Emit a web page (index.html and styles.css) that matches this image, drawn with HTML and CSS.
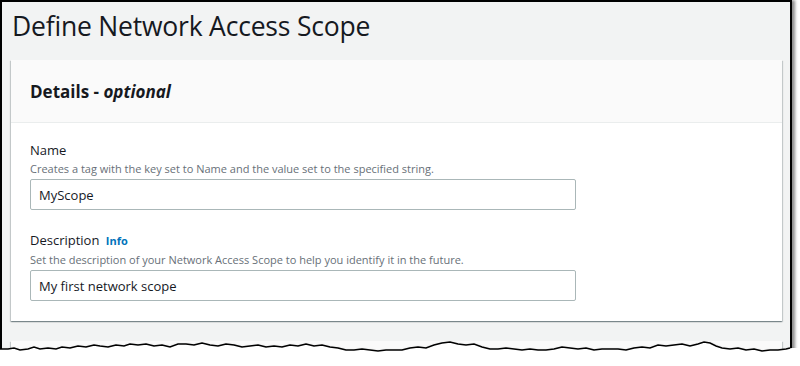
FILE: index.html
```html
<!DOCTYPE html>
<html lang="en">
<head>
    <meta charset="UTF-8">
    <title>Define Network Access Scope</title>
    <link rel="stylesheet" href="styles.css">
</head>
<body>
    <div class="frame">
        <h1 class="page-title">Define Network Access Scope</h1>

        <div class="card">
            <div class="card-header">
                <h2>Details - <em>optional</em></h2>
            </div>
            <div class="card-body">
                <div class="field">
                    <label for="name">Name</label>
                    <p class="hint">Creates a tag with the key set to Name and the value set to the specified string.</p>
                    <input type="text" id="name" value="MyScope">
                </div>
                <div class="field">
                    <label for="desc">Description <a href="#" class="info">Info</a></label>
                    <p class="hint">Set the description of your Network Access Scope to help you identify it in the future.</p>
                    <input type="text" id="desc" value="My first network scope">
                </div>
            </div>
        </div>

        <div class="card card-next"></div>
    </div>

    <!-- torn paper edge across the bottom of the screenshot -->
    <svg class="torn" width="800" height="40" viewBox="0 0 800 40">
        <defs>
            <filter id="blur" x="-5%" y="-50%" width="110%" height="200%">
                <feGaussianBlur stdDeviation="1.6"/>
            </filter>
        </defs>
        <polyline class="torn-shadow" filter="url(#blur)" points="0,18 8,18 14,17 20,19 28,18 34,16 40,18 48,17 56,18 62,16 70,17 78,15 86,16 94,14 100,15 108,16 116,14 124,15 130,13 138,14 146,13 154,15 162,14 170,16 178,13 186,13 194,14 202,12 210,14 218,15 226,13 234,14 242,16 250,15 258,14 266,16 274,15 282,16 290,14 298,15 306,13 314,15 322,14 330,16 338,17 346,19 354,19 362,18 370,19 378,20 386,19 394,19 402,19 410,17 418,16 426,17 434,14 442,12 450,11 458,13 466,14 474,13 482,16 490,18 498,18 506,17 514,18 522,19 530,18 538,19 546,19 554,18 562,16 570,17 578,18 586,17 594,19 602,18 610,18 618,18 626,19 634,17 642,16 650,17 658,14 666,15 674,14 682,13 690,15 698,13 704,11 710,12 716,15 722,17 730,18 738,17 746,19 754,18 762,20 770,19 778,19 786,18 792,17 796,19"/>
        <polygon class="torn-paper" points="0,15 8,15 14,14 20,16 28,15 34,13 40,15 48,14 56,15 62,13 70,14 78,12 86,13 94,11 100,12 108,13 116,11 124,12 130,10 138,11 146,10 154,12 162,11 170,13 178,10 186,10 194,11 202,9 210,11 218,12 226,10 234,11 242,13 250,12 258,11 266,13 274,12 282,13 290,11 298,12 306,10 314,12 322,11 330,13 338,14 346,16 354,16 362,15 370,16 378,17 386,16 394,16 402,16 410,14 418,13 426,14 434,11 442,9 450,8 458,10 466,11 474,10 482,13 490,15 498,15 506,14 514,15 522,16 530,15 538,16 546,16 554,15 562,13 570,14 578,15 586,14 594,16 602,15 610,15 618,15 626,16 634,14 642,13 650,14 658,11 666,12 674,11 682,10 690,12 698,10 704,8 710,9 716,12 722,14 730,15 738,14 746,16 754,15 762,17 770,16 778,16 786,15 792,14 800,14 800,40 0,40"/>
        <polyline class="torn-line" points="0,15 8,15 14,14 20,16 28,15 34,13 40,15 48,14 56,15 62,13 70,14 78,12 86,13 94,11 100,12 108,13 116,11 124,12 130,10 138,11 146,10 154,12 162,11 170,13 178,10 186,10 194,11 202,9 210,11 218,12 226,10 234,11 242,13 250,12 258,11 266,13 274,12 282,13 290,11 298,12 306,10 314,12 322,11 330,13 338,14 346,16 354,16 362,15 370,16 378,17 386,16 394,16 402,16 410,14 418,13 426,14 434,11 442,9 450,8 458,10 466,11 474,10 482,13 490,15 498,15 506,14 514,15 522,16 530,15 538,16 546,16 554,15 562,13 570,14 578,15 586,14 594,16 602,15 610,15 618,15 626,16 634,14 642,13 650,14 658,11 666,12 674,11 682,10 690,12 698,10 704,8 710,9 716,12 722,14 730,15 738,14 746,16 754,15 762,17 770,16 778,16 786,15 790,14"/>
    </svg>
</body>
</html>
```

FILE: styles.css
```css
html, body {
    margin: 0;
    padding: 0;
    background: #fff;
    font-family: 'Open Sans', 'Liberation Sans', sans-serif;
    color: #16191f;
    overflow: hidden;
}

.frame {
    box-sizing: border-box;
    width: 792px;
    height: 366px;
    background: #f2f3f3;
    border: 2px solid #000;
    border-bottom: none;
    box-shadow: 3px 0 3px rgba(0, 0, 0, 0.45);
    padding: 0 8px 0 9px;
}

.page-title {
    margin: 0;
    padding: 6px 0 0 1px;
    height: 52px;
    font-size: 26.5px;
    font-weight: 400;
    line-height: 36px;
    letter-spacing: -0.2px;
}

.card {
    background: #fff;
    box-shadow: 0 1px 1px 0 rgba(0, 28, 36, 0.3), 1px 1px 1px 0 rgba(0, 28, 36, 0.15), -1px 1px 1px 0 rgba(0, 28, 36, 0.15);
}

.card-header {
    background: #fafafa;
    border-bottom: 1px solid #eaeded;
    height: 62px;
    display: flex;
    align-items: center;
    padding: 0 19px;
}

.card-header h2 {
    margin: 0;
    font-size: 17px;
    font-weight: 700;
}

.card-header em {
    font-style: italic;
}

.card-body {
    padding: 17px 19px 20px;
    display: flex;
    flex-direction: column;
    gap: 20px;
}

.field label {
    display: block;
    font-size: 13px;
    font-weight: 500;
    line-height: 20px;
}

.info {
    font-size: 11px;
    font-weight: 700;
    color: #0073bb;
    text-decoration: none;
    margin-left: 3px;
}

.hint {
    margin: 0 0 2px;
    font-size: 11px;
    line-height: 17px;
    color: #687078;
}

.field input {
    box-sizing: border-box;
    display: block;
    width: 546px;
    height: 31px;
    border: 1px solid #aab7b8;
    border-radius: 2px;
    padding: 0 8px;
    font-family: inherit;
    font-size: 13px;
    color: #16191f;
    background: #fff;
}

.card-next {
    margin-top: 20px;
    height: 40px;
    background: #fafafa;
}

.torn {
    position: absolute;
    left: 0;
    top: 334px;
}

.torn-paper {
    fill: #fff;
}

.torn-line {
    fill: none;
    stroke: #000;
    stroke-width: 1.4;
}

.torn-shadow {
    fill: none;
    stroke: rgba(0, 0, 0, 0.6);
    stroke-width: 3.5;
}
```
